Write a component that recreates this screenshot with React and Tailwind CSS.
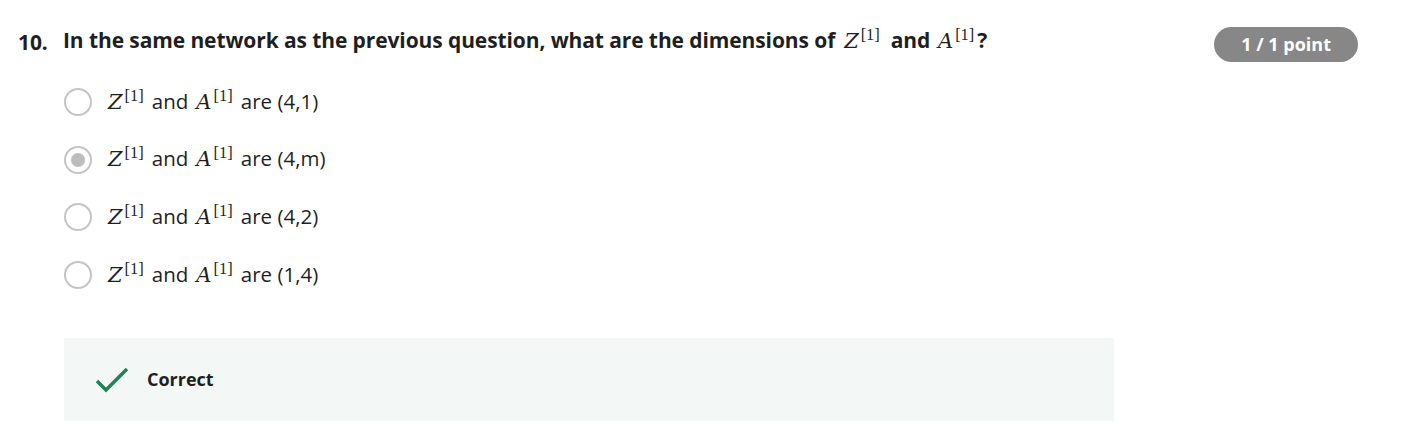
const serif = { fontFamily: '"Liberation Serif", serif' };
const mathIt = { fontFamily: '"DejaVu Serif", "Liberation Serif", serif' };

const Sym = ({ ch }) => (
  <span className="whitespace-nowrap font-normal">
    <span className="italic text-[21px]" style={mathIt}>
      {ch}
    </span>
    <span className="text-[16.5px] ml-[2px] relative -top-[8px]" style={serif}>
      [1]
    </span>
  </span>
);

const options = [
  { dims: "(4,1)", checked: false },
  { dims: "(4,m)", checked: true },
  { dims: "(4,2)", checked: false },
  { dims: "(1,4)", checked: false },
];

const Radio = ({ checked }) =>
  checked ? (
    <span className="w-[28px] h-[28px] rounded-full border-2 border-[#c4c4c4] bg-white flex items-center justify-center shrink-0">
      <span className="w-[14px] h-[14px] rounded-full bg-[#bdbdbd]" />
    </span>
  ) : (
    <span className="w-[28px] h-[28px] rounded-full border-2 border-[#c4c4c4] bg-white shrink-0" />
  );

export default function App() {
  return (
    <div
      className="w-[1410px] h-[436px] bg-white text-[#1f1f1f]"
      style={{ fontFamily: '"Open Sans", sans-serif' }}
    >
      <div className="flex items-start pt-[24px] pl-[18px] pr-[52px]">
        <div className="flex-1 flex items-center text-[21px] font-bold leading-[32px] tracking-[-0.1px]">
          <span className="w-[45px]">10.</span>
          <span className="whitespace-nowrap">
            In the same network as the previous question, what are the dimensions of
            <span className="ml-[9px]"><Sym ch="Z" /></span>
            <span className="ml-[11px]">and</span>
            <span className="ml-[8px]"><Sym ch="A" /></span>
            <span className="ml-[3px]">?</span>
          </span>
        </div>
        <span className="mt-[3px] h-[35px] px-[27px] rounded-full bg-[#878787] text-white font-bold text-[18px] flex items-center">
          1 / 1 point
        </span>
      </div>

      <div className="flex flex-col gap-[29.7px] mt-[26px] pl-[64px]">
        {options.map((o, i) => (
          <label key={i} className="flex items-center gap-[16px] h-[28px] text-[20.5px]">
            <Radio checked={o.checked} />
            <span className="whitespace-nowrap">
              <Sym ch="Z" />
              <span className="ml-[8px]">and</span>
              <span className="ml-[8px]"><Sym ch="A" /></span>
              <span className="ml-[8px]">are {o.dims}</span>
            </span>
          </label>
        ))}
      </div>

      <div className="ml-[64px] mt-[49px] w-[1050px] h-[83px] bg-[#f3f8f6] flex items-center pl-[31px] gap-[18px]">
        <svg width="34" height="28" viewBox="0 0 34 28" fill="none">
          <path d="M2 15 L11 24 L32 3" stroke="#1f8354" strokeWidth="3.5" />
        </svg>
        <span className="font-bold text-[18px]">Correct</span>
      </div>
    </div>
  );
}
